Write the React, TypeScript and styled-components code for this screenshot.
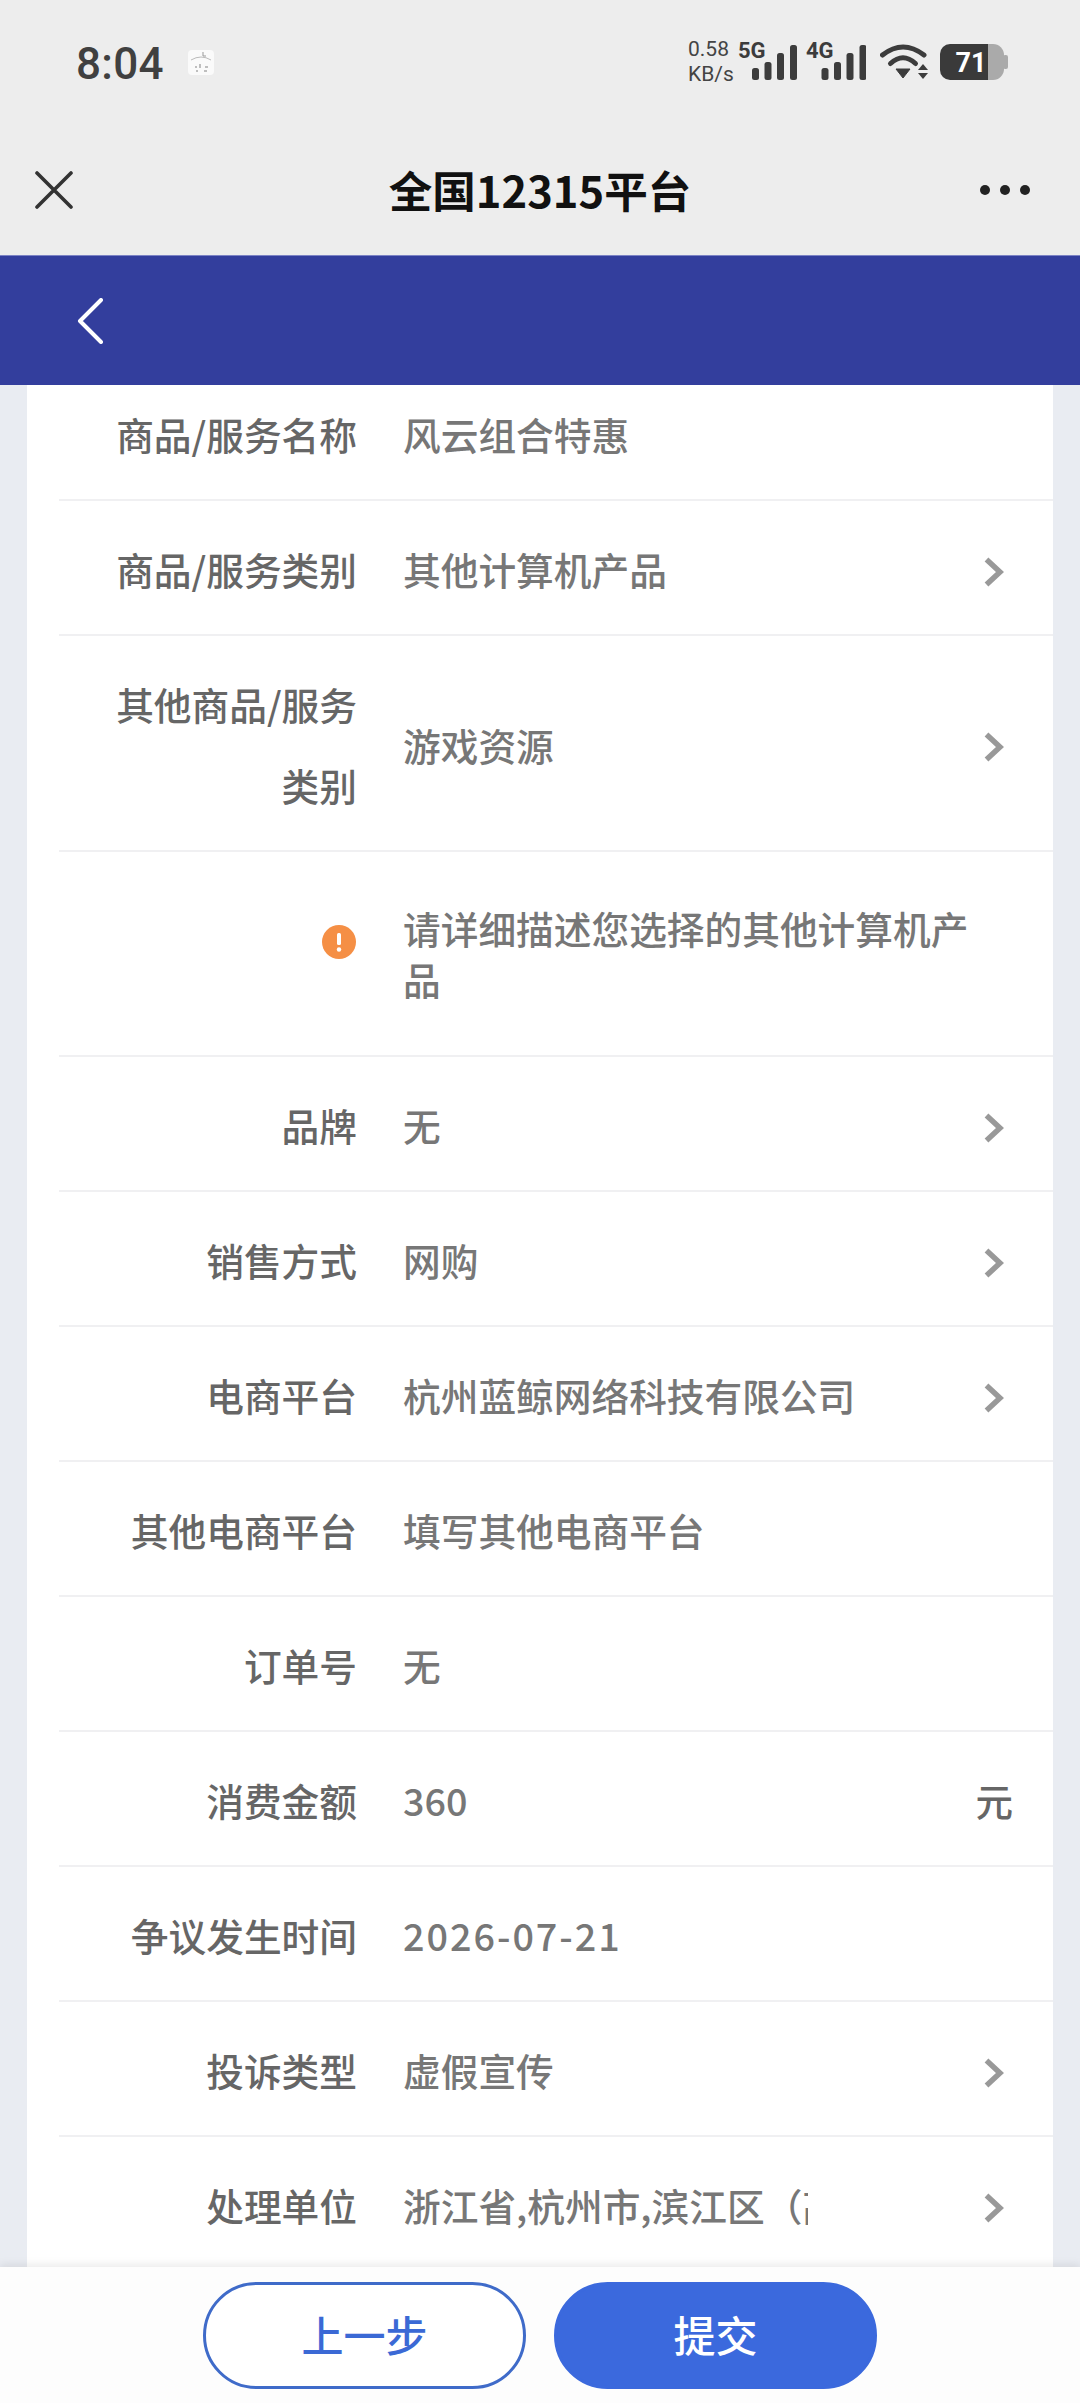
import React from "react";
import styled, { createGlobalStyle } from "styled-components";

const Global = createGlobalStyle`
  html, body { margin: 0; padding: 0; }
  body { background: #e9ecf2; font-family: "Noto Sans CJK SC", "Noto Sans", sans-serif; }
  * { box-sizing: border-box; }
`;

const Page = styled.div`
  width: 1080px;
  height: 2403px;
  display: flex;
  flex-direction: column;
  overflow: hidden;
  background: #e9ecf2;
`;

const TopChrome = styled.header`
  height: 255px;
  flex: none;
  background: #ededed;
  display: flex;
  flex-direction: column;
`;

const StatusBar = styled.div`
  height: 95px;
  padding: 28px 72px 0 76px;
  display: flex;
  align-items: center;
`;

const Time = styled.span`
  font-family: Roboto, sans-serif;
  font-size: 44px;
  font-weight: 500;
  line-height: 52px;
  color: #404040;
  margin-top: 4px;
  letter-spacing: 0.3px;
`;

const NotifyIcon = styled.svg`
  width: 26px;
  height: 25px;
  margin-left: 24px;
  margin-top: 2px;
`;

const StatusRight = styled.div`
  margin-left: auto;
  display: flex;
  align-items: center;
`;

const NetSpeed = styled.div`
  width: 46px;
  font-family: Roboto, sans-serif;
  font-size: 21px;
  line-height: 25px;
  color: #444;
  margin-right: 4px;
  margin-top: 1px;
  text-align: left;
`;

const SignalSvg = styled.svg<{ $gap: number }>`
  width: 60px;
  height: 48px;
  margin-top: -10px;
  margin-right: ${(p) => p.$gap}px;
`;

const WifiSvg = styled.svg`
  width: 48px;
  height: 36px;
  margin-right: 12px;
`;

const BatterySvg = styled.svg`
  width: 68px;
  height: 36px;
`;

const TitleBar = styled.div`
  flex: 1;
  display: grid;
  grid-template-columns: 1fr auto 1fr;
  align-items: center;
  padding: 30px 50px 0;
`;

const CloseIcon = styled.svg`
  width: 38px;
  height: 38px;
  margin-left: -15px;
`;

const Title = styled.h1`
  margin: 0;
  font-size: 43.5px;
  line-height: 60px;
  font-weight: 700;
  color: #111;
  text-align: center;
`;

const Dots = styled.div`
  justify-self: end;
  display: flex;
  gap: 10px;
`;

const Dot = styled.i`
  width: 10px;
  height: 10px;
  border-radius: 50%;
  background: #222;
`;

const BlueBar = styled.div`
  height: 130px;
  flex: none;
  background: #333e9d;
  display: flex;
  align-items: center;
  padding-left: 76px;
  border-top: 1px solid #7c83c4;
`;

const BackIcon = styled.svg`
  width: 28px;
  height: 46px;
`;

const Main = styled.main`
  flex: 1;
  min-height: 0;
  overflow: hidden;
  padding: 0 27px;
`;

const Card = styled.section`
  margin-top: -19px;
  background: #fff;
  padding-left: 32px;
`;

const Row = styled.div<{ $notice?: boolean }>`
  display: flex;
  align-items: ${(p) => (p.$notice ? "flex-start" : "center")};
  padding: ${(p) => (p.$notice ? "50px 0 51px" : "27px 0 25px")};
  border-bottom: 2px solid #f0f0f2;
`;

const Label = styled.div`
  width: 298px;
  flex: none;
  padding-left: 38px;
  text-align: right;
  font-size: 37.7px;
  line-height: 81px;
  font-weight: 500;
  color: #666;
`;

const NoticeCell = styled.div`
  width: 298px;
  flex: none;
  display: flex;
  justify-content: flex-end;
  padding: 23px 1px 0 0;
`;

const AlertIcon = styled.svg`
  width: 34px;
  height: 34px;
`;

const Value = styled.div<{ $clip?: boolean; $wide?: boolean; $narrow?: boolean }>`
  margin-left: 46px;
  flex: ${(p) => (p.$clip ? "none" : "1")};
  width: ${(p) => (p.$clip ? "405px" : "auto")};
  max-width: ${(p) => (p.$narrow ? "580px" : "none")};
  min-width: 0;
  font-size: 37.7px;
  line-height: 51px;
  font-weight: 500;
  color: #777;
  letter-spacing: ${(p) => (p.$wide ? "2px" : "0")};
  white-space: ${(p) => (p.$clip ? "nowrap" : "normal")};
  overflow: ${(p) => (p.$clip ? "hidden" : "visible")};
`;

const Spacer = styled.div`
  flex: 1;
`;

const Unit = styled.span`
  font-size: 37.5px;
  line-height: 51px;
  font-weight: 500;
  color: #666;
  margin-right: 40px;
`;

const ChevronIcon = styled.svg`
  width: 20px;
  height: 30px;
  flex: none;
  margin-right: 49px;
  margin-top: 6px;
`;

const Footer = styled.footer`
  height: 136px;
  flex: none;
  background: #fdfdfd;
  box-shadow: 0 -3px 8px rgba(0, 0, 0, 0.08);
  display: flex;
  justify-content: center;
  gap: 28px;
  padding: 15px 0 0 0;
  position: relative;
`;

const Btn = styled.button<{ $primary?: boolean }>`
  width: 323px;
  height: 107px;
  border-radius: 54px;
  border: 3px solid #3f6bc9;
  background: ${(p) => (p.$primary ? "#3b69dd" : "#fff")};
  border-color: ${(p) => (p.$primary ? "#3b69dd" : "#3f6bc9")};
  color: ${(p) => (p.$primary ? "#fff" : "#3b69d5")};
  font-family: inherit;
  font-size: 42px;
  font-weight: 500;
  padding: 0 0 5px;
`;

const Chevron = () => (
  <ChevronIcon viewBox="0 0 20 30">
    <polyline points="2.5,2.5 16,15 2.5,27.5" fill="none" stroke="#999" strokeWidth="5.5" />
  </ChevronIcon>
);

const Signal = ({ label, offset, gap }: { label: string; offset: number; gap: number }) => (
  <SignalSvg $gap={gap} viewBox="0 -10 60 48">
    <text x="0" y="15" fontFamily="Roboto, sans-serif" fontWeight="700" fontSize="22" fill="#3c3c3c">
      {label}
    </text>
    {[
      [0, 25],
      [12.5, 19],
      [25, 10],
      [38, 2],
    ].map(([x, top]) => (
      <rect key={x} x={offset + x} y={top} width="7" height={37 - top} rx="2.5" fill="#3c3c3c" />
    ))}
  </SignalSvg>
);

const rows: { label: string; value: string; arrow?: boolean; unit?: string; wide?: boolean; clip?: boolean }[] = [
  { label: "商品/服务名称", value: "风云组合特惠" },
  { label: "商品/服务类别", value: "其他计算机产品", arrow: true },
  { label: "其他商品/服务类别", value: "游戏资源", arrow: true },
];

const rowsAfter: typeof rows = [
  { label: "品牌", value: "无", arrow: true },
  { label: "销售方式", value: "网购", arrow: true },
  { label: "电商平台", value: "杭州蓝鲸网络科技有限公司", arrow: true },
  { label: "其他电商平台", value: "填写其他电商平台" },
  { label: "订单号", value: "无" },
  { label: "消费金额", value: "360", unit: "元" },
  { label: "争议发生时间", value: "2026-07-21", wide: true },
  { label: "投诉类型", value: "虚假宣传", arrow: true },
  { label: "处理单位", value: "浙江省,杭州市,滨江区（高新区）市场监督管理局", arrow: true, clip: true },
];

const FormRow = ({ label, value, arrow, unit, wide, clip }: (typeof rows)[number]) => (
  <Row>
    <Label>{label}</Label>
    <Value $wide={wide} $clip={clip}>
      {value}
    </Value>
    {clip && <Spacer />}
    {unit && <Unit>{unit}</Unit>}
    {arrow && <Chevron />}
  </Row>
);

export default function App() {
  return (
    <Page>
      <Global />
      <TopChrome>
        <StatusBar>
          <Time>8:04</Time>
          <NotifyIcon viewBox="0 0 26 25">
            <rect width="26" height="25" rx="4" fill="#fafafa" />
            <path d="M3 10 Q13 4 23 10" fill="none" stroke="#bbb" strokeWidth="1" />
            <path d="M15 2v4h3" fill="none" stroke="#999" strokeWidth="1" />
            <path d="M7 17h2M12 14v4M17 17h3M8 21h2M16 21h3" stroke="#aaa" strokeWidth="1.5" />
          </NotifyIcon>
          <StatusRight>
            <NetSpeed>
              0.58
              <br />
              KB/s
            </NetSpeed>
            <Signal label="5G" offset={14} gap={8} />
            <Signal label="4G" offset={15.5} gap={14} />
            <WifiSvg viewBox="0 0 48 36">
              <path d="M2.5 11 Q23 -5 44 11" fill="none" stroke="#3c3c3c" strokeWidth="5" strokeLinecap="round" />
              <path d="M10.5 19.5 Q23 8 35.5 19.5" fill="none" stroke="#3c3c3c" strokeWidth="5" strokeLinecap="round" />
              <polygon points="16,25 30,25 23,34" fill="#3c3c3c" stroke="#3c3c3c" strokeWidth="1" strokeLinejoin="round" />
              <polygon points="43,20 48,26 38,26" fill="#3c3c3c" />
              <polygon points="38,29 48,29 43,35" fill="#3c3c3c" />
            </WifiSvg>
            <BatterySvg viewBox="0 0 68 36">
              <rect x="63" y="11" width="5" height="14" rx="2" fill="#aaa" />
              <rect x="30" width="34" height="36" rx="11" fill="#aaa" />
              <path d="M10 0H48V36H10A10 10 0 0 1 0 26V10A10 10 0 0 1 10 0Z" fill="#3a3a3a" />
              <text x="31" y="28" textAnchor="middle" fontFamily="Roboto, sans-serif" fontWeight="700" fontSize="27" fill="#fff">
                71
              </text>
            </BatterySvg>
          </StatusRight>
        </StatusBar>
        <TitleBar>
          <CloseIcon viewBox="0 0 38 38">
            <path d="M2 2 L36 36 M36 2 L2 36" stroke="#333" strokeWidth="3.6" strokeLinecap="round" />
          </CloseIcon>
          <Title>全国12315平台</Title>
          <Dots>
            <Dot />
            <Dot />
            <Dot />
          </Dots>
        </TitleBar>
      </TopChrome>
      <BlueBar>
        <BackIcon viewBox="0 0 28 46">
          <path d="M25 2 L4 23 L25 44" fill="none" stroke="#fff" strokeWidth="4" strokeLinecap="round" strokeLinejoin="round" />
        </BackIcon>
      </BlueBar>
      <Main>
        <Card>
          {rows.map((r) => (
            <FormRow key={r.label} {...r} />
          ))}
          <Row $notice>
            <NoticeCell>
              <AlertIcon viewBox="0 0 34 34">
                <circle cx="17" cy="17" r="17" fill="#f58f45" />
                <rect x="15" y="8" width="4" height="12" rx="1.5" fill="#fff" />
                <circle cx="17" cy="24.5" r="2.2" fill="#fff" />
              </AlertIcon>
            </NoticeCell>
            <Value $narrow>请详细描述您选择的其他计算机产品</Value>
          </Row>
          {rowsAfter.map((r) => (
            <FormRow key={r.label} {...r} />
          ))}
        </Card>
      </Main>
      <Footer>
        <Btn>上一步</Btn>
        <Btn $primary>提交</Btn>
      </Footer>
    </Page>
  );
}
